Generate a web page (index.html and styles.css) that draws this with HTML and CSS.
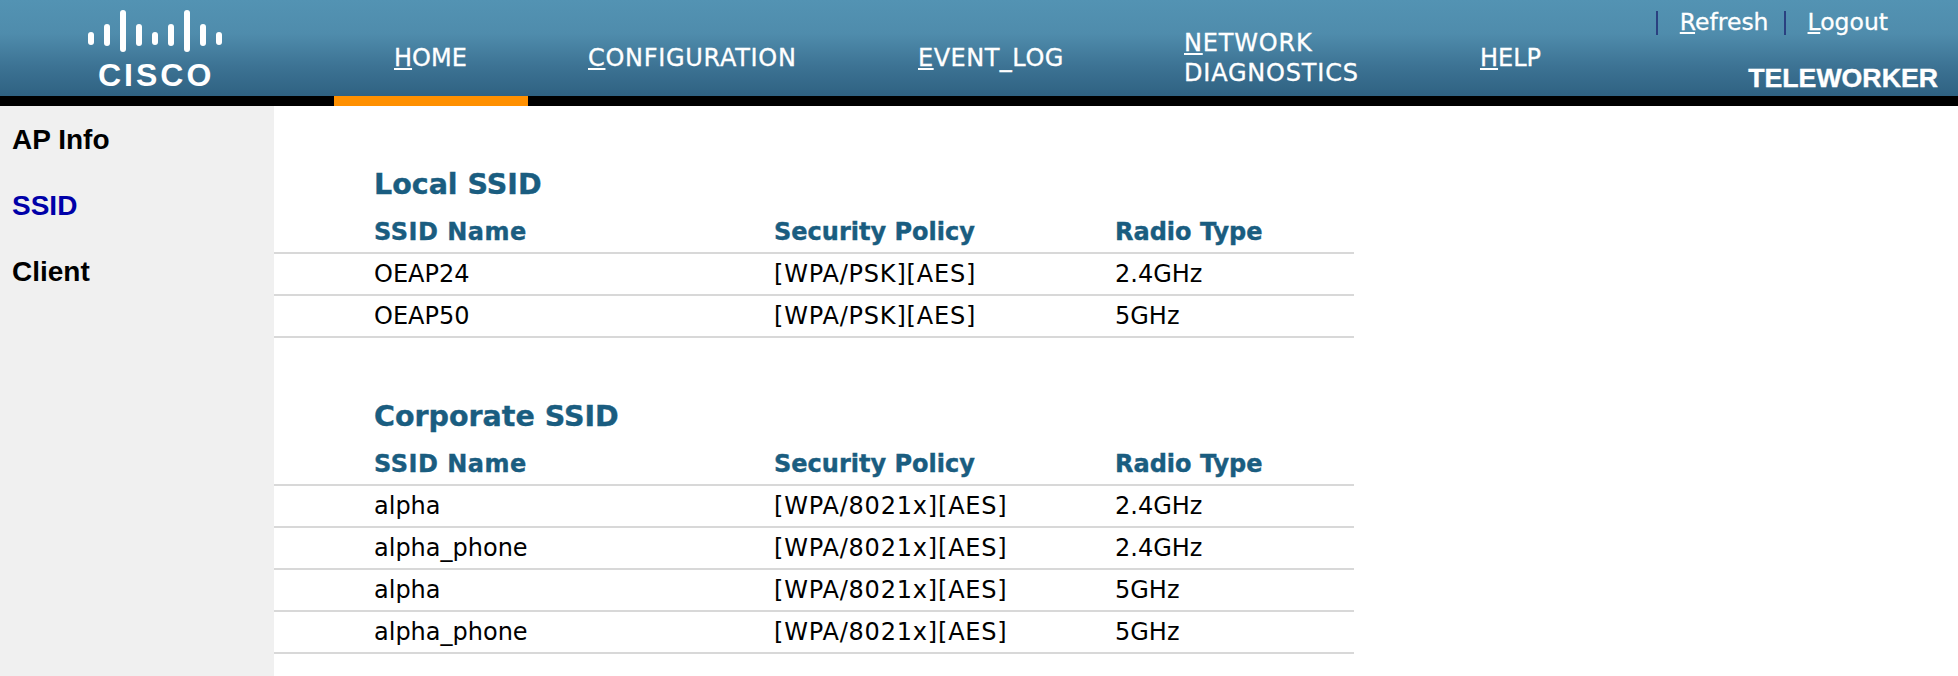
FILE: index.html
```html
<!DOCTYPE html>
<html lang="en">
<head>
<meta charset="utf-8">
<title>SSID</title>
<link rel="stylesheet" href="styles.css">
</head>
<body>
<header class="top">
  <div class="logo">
    <svg class="logo-bars" width="150" height="50" viewBox="0 0 150 50">
      <g fill="#fff">
        <rect x="3" y="22" width="6" height="13" rx="3"/>
        <rect x="19" y="14" width="6" height="22" rx="3"/>
        <rect x="35" y="0" width="6" height="42" rx="3"/>
        <rect x="51" y="14" width="6" height="22" rx="3"/>
        <rect x="67" y="22" width="6" height="13" rx="3"/>
        <rect x="83" y="14" width="6" height="22" rx="3"/>
        <rect x="99" y="0" width="6" height="42" rx="3"/>
        <rect x="115" y="14" width="6" height="22" rx="3"/>
        <rect x="131" y="22" width="6" height="13" rx="3"/>
      </g>
    </svg>
    <div class="logo-word">CISCO</div>
  </div>
  <nav class="nav">
    <a class="tab tab-home active"><span><u>H</u>OME</span></a>
    <a class="tab tab-config"><span><u>C</u>ONFIGURATION</span></a>
    <a class="tab tab-event"><span><u>E</u>VENT_LOG</span></a>
    <a class="tab tab-net"><span><u>N</u>ETWORK<br>DIAGNOSTICS</span></a>
    <a class="tab tab-help"><span><u>H</u>ELP</span></a>
  </nav>
  <div class="util">
    <div class="util-links">
      <span class="sep"></span><a class="util-link"><u>R</u>efresh</a>
      <span class="sep"></span><a class="util-link"><u>L</u>ogout</a>
    </div>
    <div class="mode">TELEWORKER</div>
  </div>
</header>
<div class="page">
  <aside class="side">
    <a class="side-item">AP Info</a>
    <a class="side-item current">SSID</a>
    <a class="side-item">Client</a>
  </aside>
  <main class="main">
    <section class="block">
      <h2 class="title">Local SSID</h2>
      <table class="grid">
        <thead><tr><th>SSID Name</th><th>Security Policy</th><th>Radio Type</th></tr></thead>
        <tbody>
          <tr><td>OEAP24</td><td>[WPA/PSK][AES]</td><td>2.4GHz</td></tr>
          <tr><td>OEAP50</td><td>[WPA/PSK][AES]</td><td>5GHz</td></tr>
        </tbody>
      </table>
    </section>
    <section class="block">
      <h2 class="title">Corporate SSID</h2>
      <table class="grid">
        <thead><tr><th>SSID Name</th><th>Security Policy</th><th>Radio Type</th></tr></thead>
        <tbody>
          <tr><td>alpha</td><td>[WPA/8021x][AES]</td><td>2.4GHz</td></tr>
          <tr><td>alpha_phone</td><td>[WPA/8021x][AES]</td><td>2.4GHz</td></tr>
          <tr><td>alpha</td><td>[WPA/8021x][AES]</td><td>5GHz</td></tr>
          <tr><td>alpha_phone</td><td>[WPA/8021x][AES]</td><td>5GHz</td></tr>
        </tbody>
      </table>
    </section>
  </main>
</div>
</body>
</html>
```

FILE: styles.css
```css
html, body {
  margin: 0;
  padding: 0;
  height: 676px;
  overflow: hidden;
  background: #fff;
  font-family: "DejaVu Sans", sans-serif;
}

.top {
  display: flex;
  box-sizing: border-box;
  height: 106px;
  border-bottom: 10px solid #000;
  background: linear-gradient(to bottom, #5393b3 0%, #4f8cac 35%, #3c7293 70%, #2f6282 100%);
  color: #fff;
}

.logo {
  width: 334px;
  flex: none;
  box-sizing: border-box;
  padding: 10px 0 0 85px;
  position: relative;
}

.logo-bars {
  display: block;
  height: 50px;
}

.logo-word {
  position: absolute;
  left: 98px;
  top: 56px;
  font: bold 32px/38px "Liberation Sans", sans-serif;
  letter-spacing: 3px;
}

.nav {
  display: flex;
  height: 106px;
  flex: none;
}

.tab {
  box-sizing: border-box;
  display: flex;
  align-items: center;
  height: 106px;
  padding: 20px 0 0 60px;
  border-bottom: 10px solid transparent;
  font-size: 24px;
  line-height: 30px;
  letter-spacing: 0.5px;
  -webkit-text-stroke: 0.3px #fff;
}

.tab.active { border-bottom-color: #ff9000; }
.tab-home { width: 194px; letter-spacing: 0; }
.tab-config { width: 330px; letter-spacing: 0.7px; }
.tab-event { width: 266px; }
.tab-net { width: 296px; letter-spacing: 0.8px; }
.tab-help { width: 200px; letter-spacing: 0; }

.util {
  flex: 1;
  display: flex;
  flex-direction: column;
  align-items: flex-end;
  padding-right: 20px;
}

.util-links {
  display: flex;
  align-items: center;
  height: 44px;
  font-size: 23.5px;
  padding-right: 50px;
  -webkit-text-stroke: 0.3px #fff;
}

.sep {
  width: 2px;
  height: 24px;
  background: #2a4080;
  margin: 1px 22px 0 15px;
}

.mode {
  font: bold 26.7px/30px "Liberation Sans", sans-serif;
  margin-top: 19px;
  -webkit-text-stroke: 0.4px #fff;
}

.page {
  display: flex;
  height: 570px;
}

.side {
  width: 274px;
  flex: none;
  background: #f0f0f0;
  box-sizing: border-box;
  padding: 1px 0 0 12px;
  font: bold 28px/66px "Liberation Sans", sans-serif;
  color: #000;
}

.side-item { display: block; }
.side-item.current { color: #0000a8; }

.main {
  width: 1080px;
  padding-top: 52px;
}

.block { margin-bottom: 52px; }

.title {
  margin: 0;
  padding: 2px 0 0 100px;
  font-size: 28.5px;
  line-height: 49px;
  color: #1a5d80;
  -webkit-text-stroke: 0.4px #1a5d80;
}

.grid {
  width: 1080px;
  border-collapse: collapse;
  table-layout: fixed;
}

.grid th {
  height: 41px;
  padding: 2px 0 0;
  text-align: left;
  font-size: 24px;
  color: #1a5d80;
  -webkit-text-stroke: 0.4px #1a5d80;
}

.grid td {
  height: 40px;
  padding: 0;
  font-size: 24px;
  color: #000;
}

.grid tr { border-bottom: 2px solid #d8d8d8; }

.grid th:first-child, .grid td:first-child {
  width: 400px;
  padding-left: 100px;
}
.grid th:first-child { letter-spacing: 0.5px; }
.grid th:nth-child(2), .grid td:nth-child(2) { width: 341px; }
.grid td:nth-child(2) { letter-spacing: 0.8px; }
```
